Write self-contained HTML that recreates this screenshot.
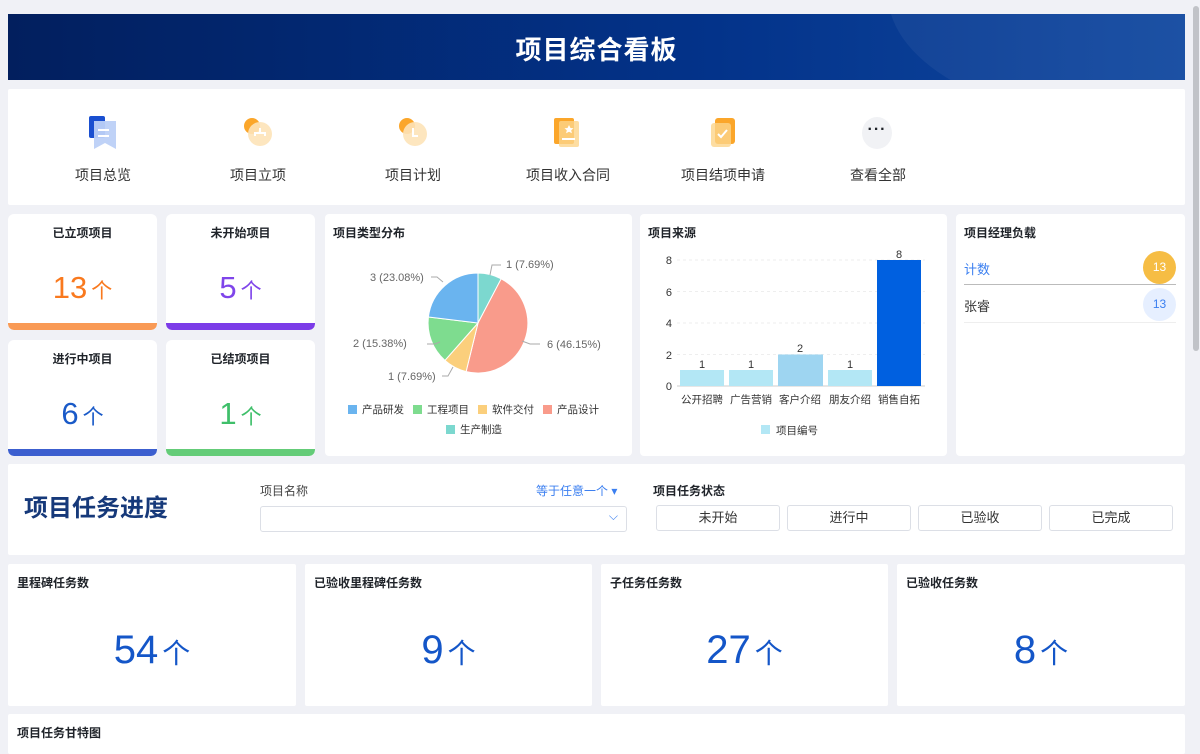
<!DOCTYPE html>
<html><head><meta charset="utf-8">
<style>
*{box-sizing:border-box;margin:0;padding:0}
body{width:1200px;height:748px;overflow:hidden;background:#f0f1f6;font-family:"Liberation Sans","Noto Sans CJK SC",sans-serif;color:#1f2329;position:relative}
.abs{position:absolute}
.card{position:absolute;background:#fff;border-radius:4px}
.t{font-size:12px;font-weight:bold;color:#1f2329}
.small .t{position:absolute;top:10px;width:100%;text-align:center}
.small .n{position:absolute;top:56px;width:100%;text-align:center;font-size:31px}
.small .n span{font-size:21px;margin-left:4px}
.small .bar{position:absolute;bottom:0;left:0;right:0;height:7px;border-radius:0 0 6px 6px}
.small{border-radius:6px;overflow:hidden}
.nav{position:absolute;top:165px;font-size:14px;color:#333;text-align:center;width:120px}
.btn{position:absolute;top:505px;height:26px;width:124px;border:1px solid #dcdfe6;border-radius:3px;font-size:13px;color:#333;text-align:center;line-height:24px;background:#fff}
.big .n{position:absolute;top:64px;width:100%;text-align:center;font-size:40px;color:#1456c8}
.big .n span{font-size:28px;margin-left:4px}
.big .t{position:absolute;left:9px;top:10px}
</style></head><body>
<div class="abs" style="left:8px;top:14px;width:1177px;height:66px;background:linear-gradient(90deg,#021f5e,#03338a 60%,#1048a0);overflow:hidden">
 <div class="abs" style="left:880px;top:-150px;width:500px;height:260px;border-radius:50%;background:rgba(255,255,255,0.05)"></div>
 <div class="abs" style="left:0;width:100%;top:16px;text-align:center;color:#fff;font-size:26px;font-weight:bold;letter-spacing:1px">项目综合看板</div>
</div>
<div class="card" style="left:8px;top:89px;width:1177px;height:116px;border-radius:2px"></div>
<svg class="abs" style="left:88px;top:116px" width="30" height="36"><rect x="1" y="0" width="16" height="22" rx="2" fill="#1a4fd0"/><path d="M6 5h22v28l-11-6-11 6z" fill="#bcd0f7" opacity=".95"/><rect x="10" y="13" width="11" height="2" fill="#fff"/><rect x="10" y="19" width="11" height="2" fill="#fff"/></svg>
<svg class="abs" style="left:243px;top:117px" width="32" height="32"><circle cx="9" cy="9" r="8" fill="#fba62a"/><circle cx="17" cy="17" r="12" fill="#fde3b8" opacity=".9"/><path d="M17 11v4M12 19v-3h10v3" stroke="#fff" stroke-width="2" fill="none"/></svg>
<svg class="abs" style="left:398px;top:117px" width="32" height="32"><circle cx="9" cy="9" r="8" fill="#fba62a"/><circle cx="17" cy="17" r="12" fill="#fde3b8" opacity=".9"/><path d="M15 11v8h5" stroke="#fff" stroke-width="2" fill="none"/></svg>
<svg class="abs" style="left:553px;top:117px" width="30" height="32"><rect x="1" y="1" width="20" height="26" rx="2" fill="#fba62a"/><rect x="6" y="4" width="20" height="26" rx="2" fill="#fdd58a" opacity=".8"/><path d="M16 8l1.5 3 3 .3-2.3 2 .7 3-2.9-1.6-2.9 1.6.7-3-2.3-2 3-.3z" fill="#fff"/><rect x="9" y="21" width="13" height="2" fill="#fff"/></svg>
<svg class="abs" style="left:709px;top:117px" width="30" height="32"><rect x="6" y="1" width="20" height="26" rx="3" fill="#fba62a"/><rect x="2" y="6" width="20" height="24" rx="3" fill="#fdd58a" opacity=".8"/><path d="M9 17l3 3 6-7" stroke="#fff" stroke-width="2" fill="none"/></svg>
<div class="abs" style="left:862px;top:117px;width:30px;height:32px;border-radius:50%;background:#f1f2f5;text-align:center;font-size:16px;line-height:26px;font-weight:bold;letter-spacing:1px">···</div>
<div class="nav" style="left:43px">项目总览</div>
<div class="nav" style="left:198px">项目立项</div>
<div class="nav" style="left:353px">项目计划</div>
<div class="nav" style="left:508px">项目收入合同</div>
<div class="nav" style="left:663px">项目结项申请</div>
<div class="nav" style="left:818px">查看全部</div>

<div class="card small" style="left:8px;top:214px;width:149px;height:116px"><div class="t">已立项项目</div><div class="n" style="color:#f9791e">13<span>个</span></div><div class="bar" style="background:#f99a55"></div></div>
<div class="card small" style="left:166px;top:214px;width:149px;height:116px"><div class="t">未开始项目</div><div class="n" style="color:#7f45ea">5<span>个</span></div><div class="bar" style="background:#7c3ce8"></div></div>
<div class="card small" style="left:8px;top:340px;width:149px;height:116px"><div class="t">进行中项目</div><div class="n" style="color:#1a5ac8">6<span>个</span></div><div class="bar" style="background:#3c5fcf"></div></div>
<div class="card small" style="left:166px;top:340px;width:149px;height:116px"><div class="t">已结项项目</div><div class="n" style="color:#3fbf6a">1<span>个</span></div><div class="bar" style="background:#64cc78"></div></div>

<div class="card" style="left:325px;top:214px;width:307px;height:242px"><div class="t abs" style="left:8px;top:10px">项目类型分布</div></div>
<svg class="abs" style="left:325px;top:214px" width="307" height="242" font-family="Liberation Sans,Noto Sans CJK SC,sans-serif" font-size="11" fill="#666">
<g transform="translate(-325,-214)" stroke="#fff" stroke-width="1">
<path d="M478 323L478 273A50 50 0 0 1 501.2 278.8Z" fill="#7cd8cf"/>
<path d="M478 323L501.2 278.8A50 50 0 0 1 466.1 371.6Z" fill="#f99b8b"/>
<path d="M478 323L466.1 371.6A50 50 0 0 1 444.9 360.4Z" fill="#fbcf7c"/>
<path d="M478 323L444.9 360.4A50 50 0 0 1 428.4 317Z" fill="#7edc8f"/>
<path d="M478 323L428.4 317A50 50 0 0 1 478 273Z" fill="#6ab4ef"/>
</g>
<g fill="none" stroke="#aaa"><path d="M165 61l2-10h9M106 63h6l6 5M102 130h8l5-2M117 162h6l5-9M197 127l8 3h10"/></g>
<text x="181" y="54">1 (7.69%)</text>
<text x="45" y="67">3 (23.08%)</text>
<text x="28" y="133">2 (15.38%)</text>
<text x="63" y="166">1 (7.69%)</text>
<text x="222" y="134">6 (46.15%)</text>
<g font-size="10.5" fill="#333">
<rect x="23" y="191" width="9" height="9" fill="#6ab4ef"/><text x="37" y="199">产品研发</text>
<rect x="88" y="191" width="9" height="9" fill="#7edc8f"/><text x="102" y="199">工程项目</text>
<rect x="153" y="191" width="9" height="9" fill="#fbcf7c"/><text x="167" y="199">软件交付</text>
<rect x="218" y="191" width="9" height="9" fill="#f99b8b"/><text x="232" y="199">产品设计</text>
<rect x="121" y="211" width="9" height="9" fill="#7cd8cf"/><text x="135" y="219">生产制造</text>
</g>
</svg>

<div class="card" style="left:640px;top:214px;width:307px;height:242px"><div class="t abs" style="left:8px;top:10px">项目来源</div></div>
<svg class="abs" style="left:640px;top:214px" width="307" height="242" font-family="Liberation Sans,Noto Sans CJK SC,sans-serif" font-size="11" fill="#333">
<g transform="translate(-640,-214)">
<g stroke="#eee" stroke-dasharray="3 3"><path d="M677 260H925M677 291.5H925M677 323H925M677 354.5H925"/></g>
<path d="M677 386H925" stroke="#ccc"/>
<rect x="680" y="370" width="44" height="16" fill="#b3e7f5"/>
<rect x="729" y="370" width="44" height="16" fill="#b3e7f5"/>
<rect x="778" y="354.5" width="45" height="31.5" fill="#9ed5f1"/>
<rect x="828" y="370" width="44" height="16" fill="#b3e7f5"/>
<rect x="877" y="260" width="44" height="126" fill="#0060e0"/>
<g text-anchor="middle">
<text x="702" y="368">1</text><text x="751" y="368">1</text><text x="800" y="352">2</text><text x="850" y="368">1</text><text x="899" y="258">8</text>
<g text-anchor="end"><text x="672" y="264">8</text><text x="672" y="296">6</text><text x="672" y="327">4</text><text x="672" y="359">2</text><text x="672" y="390">0</text></g>
<g font-size="10.5"><text x="702" y="403">公开招聘</text><text x="751" y="403">广告营销</text><text x="800" y="403">客户介绍</text><text x="850" y="403">朋友介绍</text><text x="899" y="403">销售自拓</text></g>
</g>
<rect x="761" y="425" width="9" height="9" fill="#b3e7f5"/><text x="776" y="434" font-size="10.5">项目编号</text>
</g></svg>

<div class="card" style="left:956px;top:214px;width:229px;height:242px">
 <div class="t abs" style="left:8px;top:10px">项目经理负载</div>
 <div class="abs" style="left:8px;top:45px;font-size:13px;color:#3b7ff0">计数</div>
 <div class="abs" style="left:187px;top:37px;width:33px;height:33px;border-radius:50%;background:#f6bd44;color:#fff;font-size:12px;text-align:center;line-height:33px">13</div>
 <div class="abs" style="left:8px;top:70px;width:212px;height:1px;background:#bbb"></div>
 <div class="abs" style="left:8px;top:82px;font-size:13px;color:#333">张睿</div>
 <div class="abs" style="left:187px;top:74px;width:33px;height:33px;border-radius:50%;background:#e6efff;color:#3b7ff0;font-size:12px;text-align:center;line-height:33px">13</div>
 <div class="abs" style="left:8px;top:108px;width:212px;height:1px;background:#eee"></div>
</div>

<div class="card" style="left:8px;top:464px;width:1177px;height:91px;border-radius:2px">
 <div class="abs" style="left:16px;top:24px;font-size:24px;font-weight:bold;color:#16397a">项目任务进度</div>
 <div class="abs" style="left:252px;top:18px;font-size:12px;color:#444">项目名称</div>
 <div class="abs" style="left:528px;top:18px;font-size:12px;color:#3b7ff0">等于任意一个 ▾</div>
 <div class="abs" style="left:252px;top:42px;width:367px;height:26px;border:1px solid #dcdfe6;border-radius:3px"><span class="abs" style="right:8px;top:2px;color:#3b7ff0;font-size:12px">⌵</span></div>
 <div class="abs t" style="left:645px;top:18px">项目任务状态</div>
</div>
<div class="btn" style="left:656px">未开始</div>
<div class="btn" style="left:787px">进行中</div>
<div class="btn" style="left:918px">已验收</div>
<div class="btn" style="left:1049px">已完成</div>

<div class="card big" style="left:8px;top:564px;width:288px;height:142px;border-radius:2px"><div class="t">里程碑任务数</div><div class="n">54<span>个</span></div></div>
<div class="card big" style="left:305px;top:564px;width:287px;height:142px;border-radius:2px"><div class="t">已验收里程碑任务数</div><div class="n">9<span>个</span></div></div>
<div class="card big" style="left:601px;top:564px;width:287px;height:142px;border-radius:2px"><div class="t">子任务任务数</div><div class="n">27<span>个</span></div></div>
<div class="card big" style="left:897px;top:564px;width:288px;height:142px;border-radius:2px"><div class="t">已验收任务数</div><div class="n">8<span>个</span></div></div>

<div class="card" style="left:8px;top:714px;width:1177px;height:40px;border-radius:2px"><div class="t abs" style="left:9px;top:10px">项目任务甘特图</div></div>

<div class="abs" style="left:1192px;top:0;width:8px;height:748px;background:#f0f1f6"></div>
<div class="abs" style="left:1193px;top:6px;width:6px;height:345px;border-radius:3px;background:#c1c3c8"></div>
</body></html>
